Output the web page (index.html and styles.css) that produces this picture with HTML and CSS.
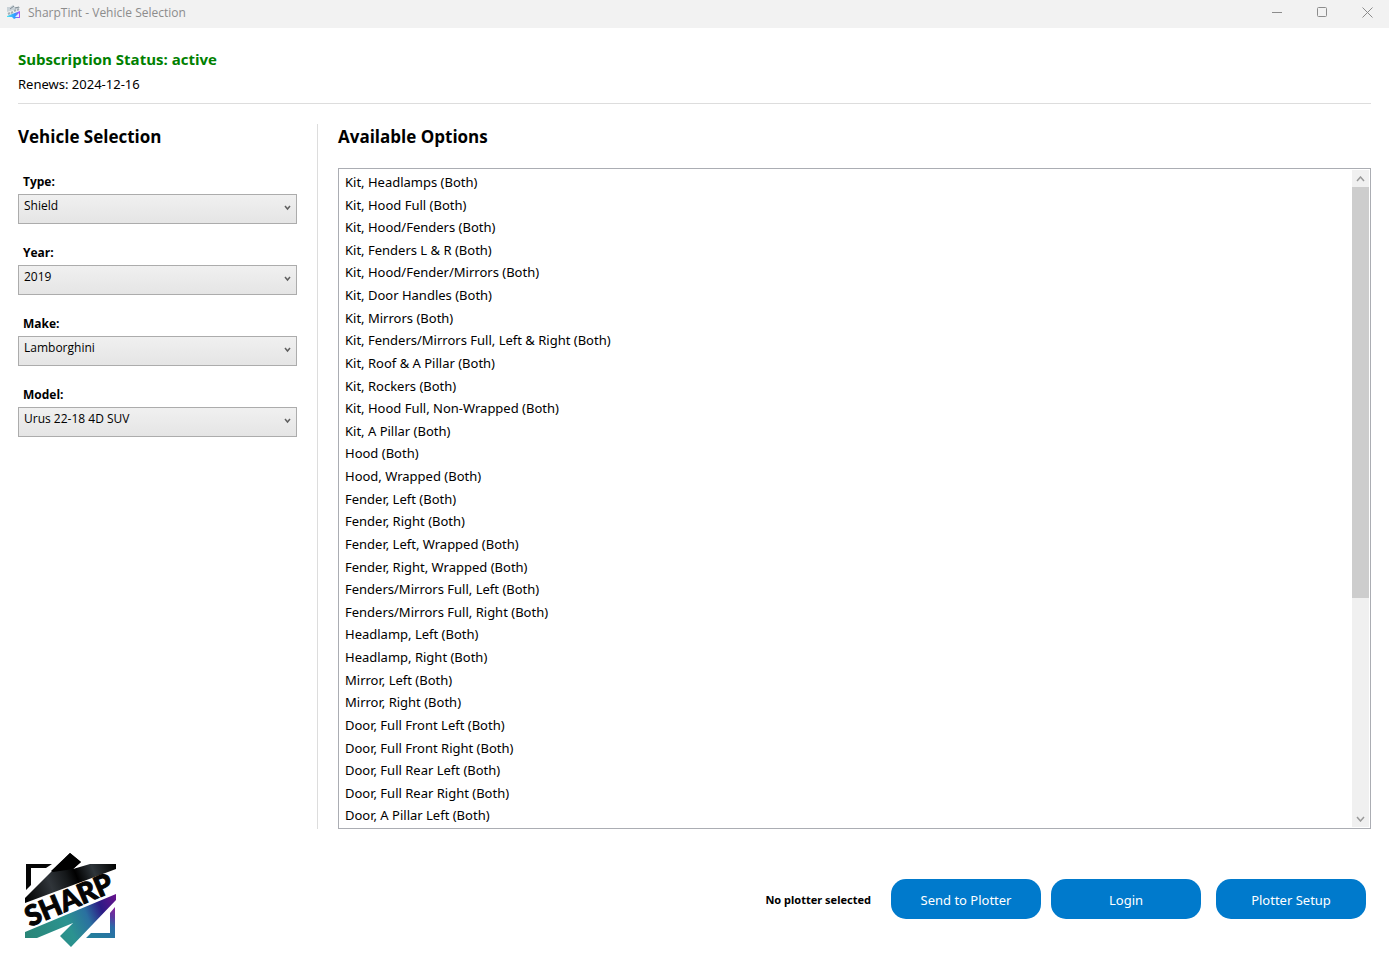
FILE: index.html
```html
<!DOCTYPE html>
<html lang="en">
<head>
<meta charset="utf-8">
<title>SharpTint - Vehicle Selection</title>
<link rel="stylesheet" href="styles.css">
</head>
<body>
<div class="window">
  <header class="titlebar">
    <svg class="app-icon" width="16" height="16" viewBox="0 0 16 16" aria-hidden="true">
      <defs><linearGradient id="mini" x1="0" x2="1"><stop offset="0" stop-color="#4fe3f0"/><stop offset=".6" stop-color="#2f9bff"/><stop offset="1" stop-color="#c04bf5"/></linearGradient></defs>
      <path d="M1 6V3h3L7 1l2 2h5v1L1 8z" fill="#c9d2d8"/>
      <path d="M4 5l4-3M9 4l4-1" stroke="#7f8b93"/>
      <path d="M2 10l2-1M5 9l2-1M8 7l2-1M11 6l2-1" stroke="#a3adb4" stroke-width="2"/>
      <path d="M1 12L14 7v7h-4l-2 1-2-2H1z" fill="url(#mini)"/>
      <path d="M9 13l4-4v4z" fill="#e6f0ff"/>
    </svg>
    <h1 class="title">SharpTint - Vehicle Selection</h1>
    <div class="caption-buttons">
      <button type="button" aria-label="Minimize"><svg width="11" height="11" viewBox="0 0 11 11"><path d="M0 5.500h10"/></svg></button>
      <button type="button" aria-label="Maximize"><svg width="11" height="11" viewBox="0 0 11 11"><rect x=".5" y=".5" width="9" height="9" rx="1"/></svg></button>
      <button type="button" aria-label="Close"><svg width="11" height="11" viewBox="0 0 11 11"><path d="M.5.500l10 10M10.500.500l-10 10"/></svg></button>
    </div>
  </header>

  <section class="status">
    <p class="status-line">Subscription Status: active</p>
    <p class="renews">Renews: 2024-12-16</p>
  </section>

  <main class="content">
    <section class="vehicle">
      <h2>Vehicle Selection</h2>
      <div class="field"><label for="type">Type:</label>
        <div class="combo"><select id="type"><option>Shield</option></select><svg width="7" height="6" viewBox="0 0 7 6"><path d="M1 1l2.500 3L6 1"/></svg></div></div>
      <div class="field"><label for="year">Year:</label>
        <div class="combo"><select id="year"><option>2019</option></select><svg width="7" height="6" viewBox="0 0 7 6"><path d="M1 1l2.500 3L6 1"/></svg></div></div>
      <div class="field"><label for="make">Make:</label>
        <div class="combo"><select id="make"><option>Lamborghini</option></select><svg width="7" height="6" viewBox="0 0 7 6"><path d="M1 1l2.500 3L6 1"/></svg></div></div>
      <div class="field"><label for="model">Model:</label>
        <div class="combo"><select id="model"><option>Urus 22-18 4D SUV</option></select><svg width="7" height="6" viewBox="0 0 7 6"><path d="M1 1l2.500 3L6 1"/></svg></div></div>
    </section>

    <section class="options">
      <h2 id="options-title">Available Options</h2>
      <div class="listbox">
        <ul role="listbox" aria-labelledby="options-title" tabindex="0">
          <li role="option">Kit, Headlamps (Both)</li>
          <li role="option">Kit, Hood Full (Both)</li>
          <li role="option">Kit, Hood/Fenders (Both)</li>
          <li role="option">Kit, Fenders L &amp; R (Both)</li>
          <li role="option">Kit, Hood/Fender/Mirrors (Both)</li>
          <li role="option">Kit, Door Handles (Both)</li>
          <li role="option">Kit, Mirrors (Both)</li>
          <li role="option">Kit, Fenders/Mirrors Full, Left &amp; Right (Both)</li>
          <li role="option">Kit, Roof &amp; A Pillar (Both)</li>
          <li role="option">Kit, Rockers (Both)</li>
          <li role="option">Kit, Hood Full, Non-Wrapped (Both)</li>
          <li role="option">Kit, A Pillar (Both)</li>
          <li role="option">Hood (Both)</li>
          <li role="option">Hood, Wrapped (Both)</li>
          <li role="option">Fender, Left (Both)</li>
          <li role="option">Fender, Right (Both)</li>
          <li role="option">Fender, Left, Wrapped (Both)</li>
          <li role="option">Fender, Right, Wrapped (Both)</li>
          <li role="option">Fenders/Mirrors Full, Left (Both)</li>
          <li role="option">Fenders/Mirrors Full, Right (Both)</li>
          <li role="option">Headlamp, Left (Both)</li>
          <li role="option">Headlamp, Right (Both)</li>
          <li role="option">Mirror, Left (Both)</li>
          <li role="option">Mirror, Right (Both)</li>
          <li role="option">Door, Full Front Left (Both)</li>
          <li role="option">Door, Full Front Right (Both)</li>
          <li role="option">Door, Full Rear Left (Both)</li>
          <li role="option">Door, Full Rear Right (Both)</li>
          <li role="option">Door, A Pillar Left (Both)</li>
        </ul>
        <div class="scrollbar">
          <button type="button" aria-label="Scroll up"><svg width="9" height="6" viewBox="0 0 9 6"><path d="M1 5l3.500-4L8 5"/></svg></button>
          <div class="track"><div class="thumb"></div></div>
          <button type="button" aria-label="Scroll down"><svg width="9" height="6" viewBox="0 0 9 6"><path d="M1 1l3.500 4L8 1"/></svg></button>
        </div>
      </div>
    </section>
  </main>

  <footer class="footer">
    <svg class="logo" width="100" height="100" viewBox="0 0 100 100" role="img" aria-label="Sharp">
      <defs>
        <linearGradient id="dark" gradientUnits="userSpaceOnUse" x1="5" y1="50" x2="96" y2="14"><stop offset="0" stop-color="#000"/><stop offset=".3" stop-color="#30353a"/><stop offset=".48" stop-color="#15181a"/><stop offset=".58" stop-color="#000"/><stop offset=".76" stop-color="#2e353a"/><stop offset="1" stop-color="#000"/></linearGradient>
        <linearGradient id="glow" gradientUnits="userSpaceOnUse" x1="5" y1="86" x2="96" y2="48"><stop offset="0" stop-color="#2a8577"/><stop offset=".45" stop-color="#2b9390"/><stop offset=".66" stop-color="#2a70a0"/><stop offset=".82" stop-color="#2c1b85"/><stop offset="1" stop-color="#64128c"/></linearGradient>
        <linearGradient id="corner" gradientUnits="userSpaceOnUse" x1="94" y1="56" x2="78" y2="88"><stop offset="0" stop-color="#8c1f9a"/><stop offset=".3" stop-color="#5a3aa0"/><stop offset=".55" stop-color="#2b6ca8"/><stop offset="1" stop-color="#247d9c"/></linearGradient>
      </defs>
      <path d="M6 14h26l-6 4H11v17l-5 5z" fill="#050505"/>
      <path d="M5 48L50 3l11 9-8 7 17-5h26v5L5 53z" fill="url(#dark)"/>
      <path d="M50 3l11 9-8 7-20 3-2-1z" fill="#000"/>
      <path d="M5 82L96 44v6L51 97 40 86l13-13-36 15H5z" fill="url(#glow)"/>
      <text class="logo-word" transform="translate(10 77) rotate(-23)">SHARP</text>
      <path d="M95 57v31H66l5-5h19V63z" fill="url(#corner)"/>
    </svg>
    <div class="actions">
      <span class="plotter">No plotter selected</span>
      <button type="button">Send to Plotter</button>
      <button type="button">Login</button>
      <button type="button" class="setup">Plotter Setup</button>
    </div>
  </footer>
</div>
</body>
</html>
```
FILE: styles.css
```css
* { box-sizing: border-box; }
body { margin: 0; background: #fff; color: #000; font: 13px/20px "Noto Sans", "Open Sans", sans-serif; }
h1, h2, p, ul { margin: 0; padding: 0; }
button { border: 0; padding: 0; background: none; font: inherit; }
svg { fill: none; display: block; }
.window { min-height: 100vh; display: flex; flex-direction: column; }

.titlebar { display: flex; align-items: center; height: 28px; padding-left: 6px; background: #f2f2f2; }
.title { flex: 1; margin-left: 6px; padding-bottom: 2px; font-size: 12px; font-weight: 400; color: #8c8c8c; font-family: "Open Sans", sans-serif; }
.app-icon { margin-bottom: 4px; }
.caption-buttons { display: flex; height: 100%; }
.caption-buttons button { width: 45px; display: grid; place-items: center; padding: 0 0 4px 2px; }
.caption-buttons svg { stroke: #8c8c8c; }

.status { margin: 0 18px; padding: 19px 0 6px; border-bottom: 1px solid #ddd; }
.status-line { font-family: "Open Sans", sans-serif; font-size: 15px; line-height: 24px; font-weight: 700; color: #008000; }
.renews { line-height: 26px; }

.content { flex: 1; display: flex; margin: 20px 18px 0; }
.vehicle { width: 300px; padding-right: 20px; border-right: 1px solid #ddd; }
h2 { font: 700 17px/26px "Open Sans", sans-serif; }
.vehicle h2 { margin-bottom: 22px; }
.field { margin-bottom: 19px; }
.field label { display: block; padding: 1px 5px 4px; font: 700 12px/17px "Open Sans", sans-serif; }
.combo { display: grid; align-items: center; }
.combo select, .combo svg { grid-area: 1 / 1; }
.combo select { appearance: none; width: 100%; height: 30px; padding: 0 20px 6px 5px; border: 1px solid #acacac; border-radius: 0; background: linear-gradient(#f0f0f0, #e5e5e5); color: #000; font: 12px/18px "Open Sans", sans-serif; }
.combo svg { justify-self: end; margin: 0 6px 2px 0; stroke: #606060; stroke-width: 1.5; pointer-events: none; }

.options { flex: 1; padding-left: 20px; display: flex; flex-direction: column; }
.options h2 { margin-bottom: 18px; }
.listbox { flex: 1; display: flex; border: 1px solid #abadb3; padding: 1px; }
.listbox ul { flex: 1; display: grid; grid-auto-rows: 1fr; padding: 1px 5px 0; list-style: none; }
.listbox li { line-height: 22px; }
.scrollbar { width: 17px; display: flex; flex-direction: column; background: #f0f0f0; }
.scrollbar button { height: 17px; display: grid; place-items: center; }
.scrollbar svg { stroke: #999; stroke-width: 1.5; }
.track { flex: 1; }
.thumb { height: 66%; background: #cdcdcd; }

.footer { display: flex; align-items: center; justify-content: space-between; height: 140px; padding: 2px 23px 0 20px; }
.actions { display: flex; align-items: center; gap: 10px; margin-bottom: 2px; }
.plotter { margin-right: 10px; padding-top: 2px; font-size: 11px; font-weight: 700; }
.actions button { width: 150px; height: 40px; padding-top: 2px; border-radius: 15px; background: #007acc; color: #fff; }
.actions .setup { margin-left: 5px; }
.logo { overflow: visible; }
.logo-word { font: 900 28px Lato, sans-serif; fill: #050505; stroke: #050505; stroke-width: 1; }
```
